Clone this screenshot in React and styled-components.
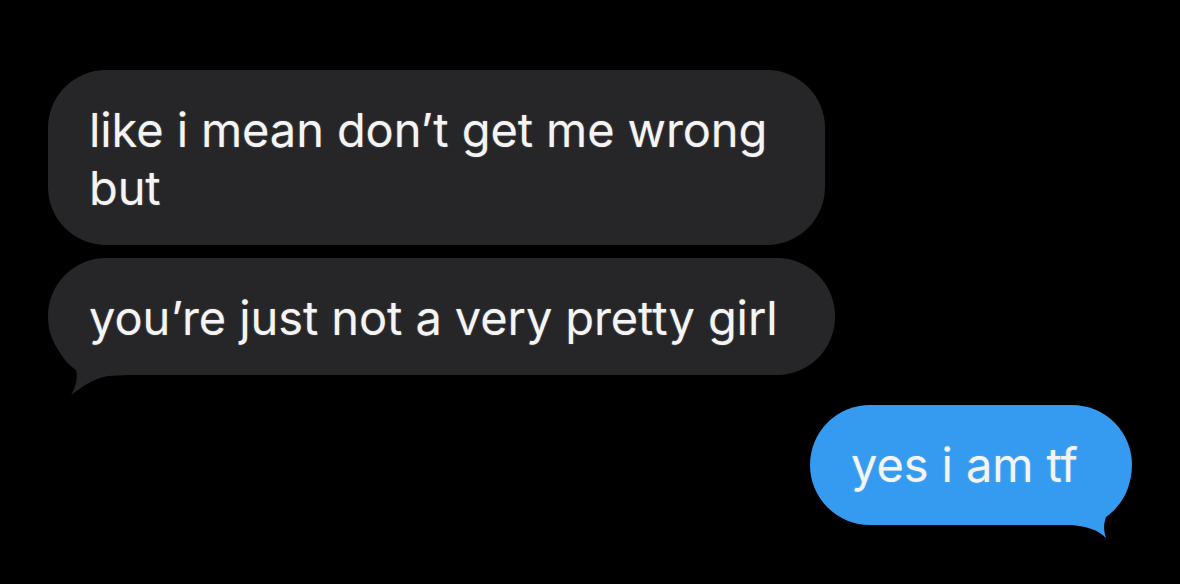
import React from "react";
import styled, { createGlobalStyle } from "styled-components";

const Global = createGlobalStyle`
  html, body { margin: 0; padding: 0; background: #000; }
  body { font-family: "Inter", "Liberation Sans", sans-serif; -webkit-font-smoothing: antialiased; }
`;

const Screen = styled.div`
  width: 1180px;
  height: 584px;
  background: #000;
  box-sizing: border-box;
  padding: 70px 48px 0 48px;
  display: flex;
  flex-direction: column;
  overflow: hidden;
`;

const Group = styled.div`
  display: flex;
  flex-direction: column;
  align-items: ${(p) => (p.$sent ? "flex-end" : "flex-start")};
  gap: 13px;
  margin-top: ${(p) => p.$gap || 0}px;
`;

const Bubble = styled.div`
  position: relative;
  z-index: 0;
  box-sizing: border-box;
  width: ${(p) => p.$w}px;
  padding: 31px 40px ${(p) => (p.$sent ? 31 : 28)}px 41px;
  border-radius: ${(p) => (p.$sent ? 60 : 58)}px;
  background: ${(p) => (p.$sent ? "#359bf0" : "#262628")};
  color: #f4f4f4;
  font-size: 47px;
  line-height: 58px;
  letter-spacing: -0.1px;
  text-shadow: 0 0 2px rgba(255, 255, 255, 0.25);
`;

const Text = styled.span`
  position: relative;
  z-index: 2;
`;

const Tail = styled.svg`
  position: absolute;
  z-index: 1;
  bottom: -24px;
  width: 80px;
  height: 80px;
  overflow: visible;
  ${(p) => (p.$sent ? "right: 0;" : "left: 0;")}
`;

const ReceivedTail = () => (
  <Tail viewBox="0 0 80 80">
    <path
      d="M2,0 C3,20 12,40 28,51 C30,58 28,68 23,76 C32,70 42,60 60,57 L80,56 L80,0 Z"
      fill="#262628"
    />
  </Tail>
);

const SentTail = () => (
  <Tail $sent viewBox="0 0 80 80">
    <path
      d="M79,0 C79,22 68,38 54,48 C51,56 52,63 54,69 C48,63 40,58 20,56 H0 V0 Z"
      fill="#359bf0"
    />
  </Tail>
);

export default function App() {
  return (
    <>
      <Global />
      <Screen>
        <Group>
          <Bubble $w={777}>
            <Text>
              like i mean don’t get me wrong
              <br />
              but
            </Text>
          </Bubble>
          <Bubble $w={787}>
            <Text>you’re just not a very pretty girl</Text>
            <ReceivedTail />
          </Bubble>
        </Group>
        <Group $sent $gap={30}>
          <Bubble $sent $w={322}>
            <Text>yes i am tf</Text>
            <SentTail />
          </Bubble>
        </Group>
      </Screen>
    </>
  );
}
